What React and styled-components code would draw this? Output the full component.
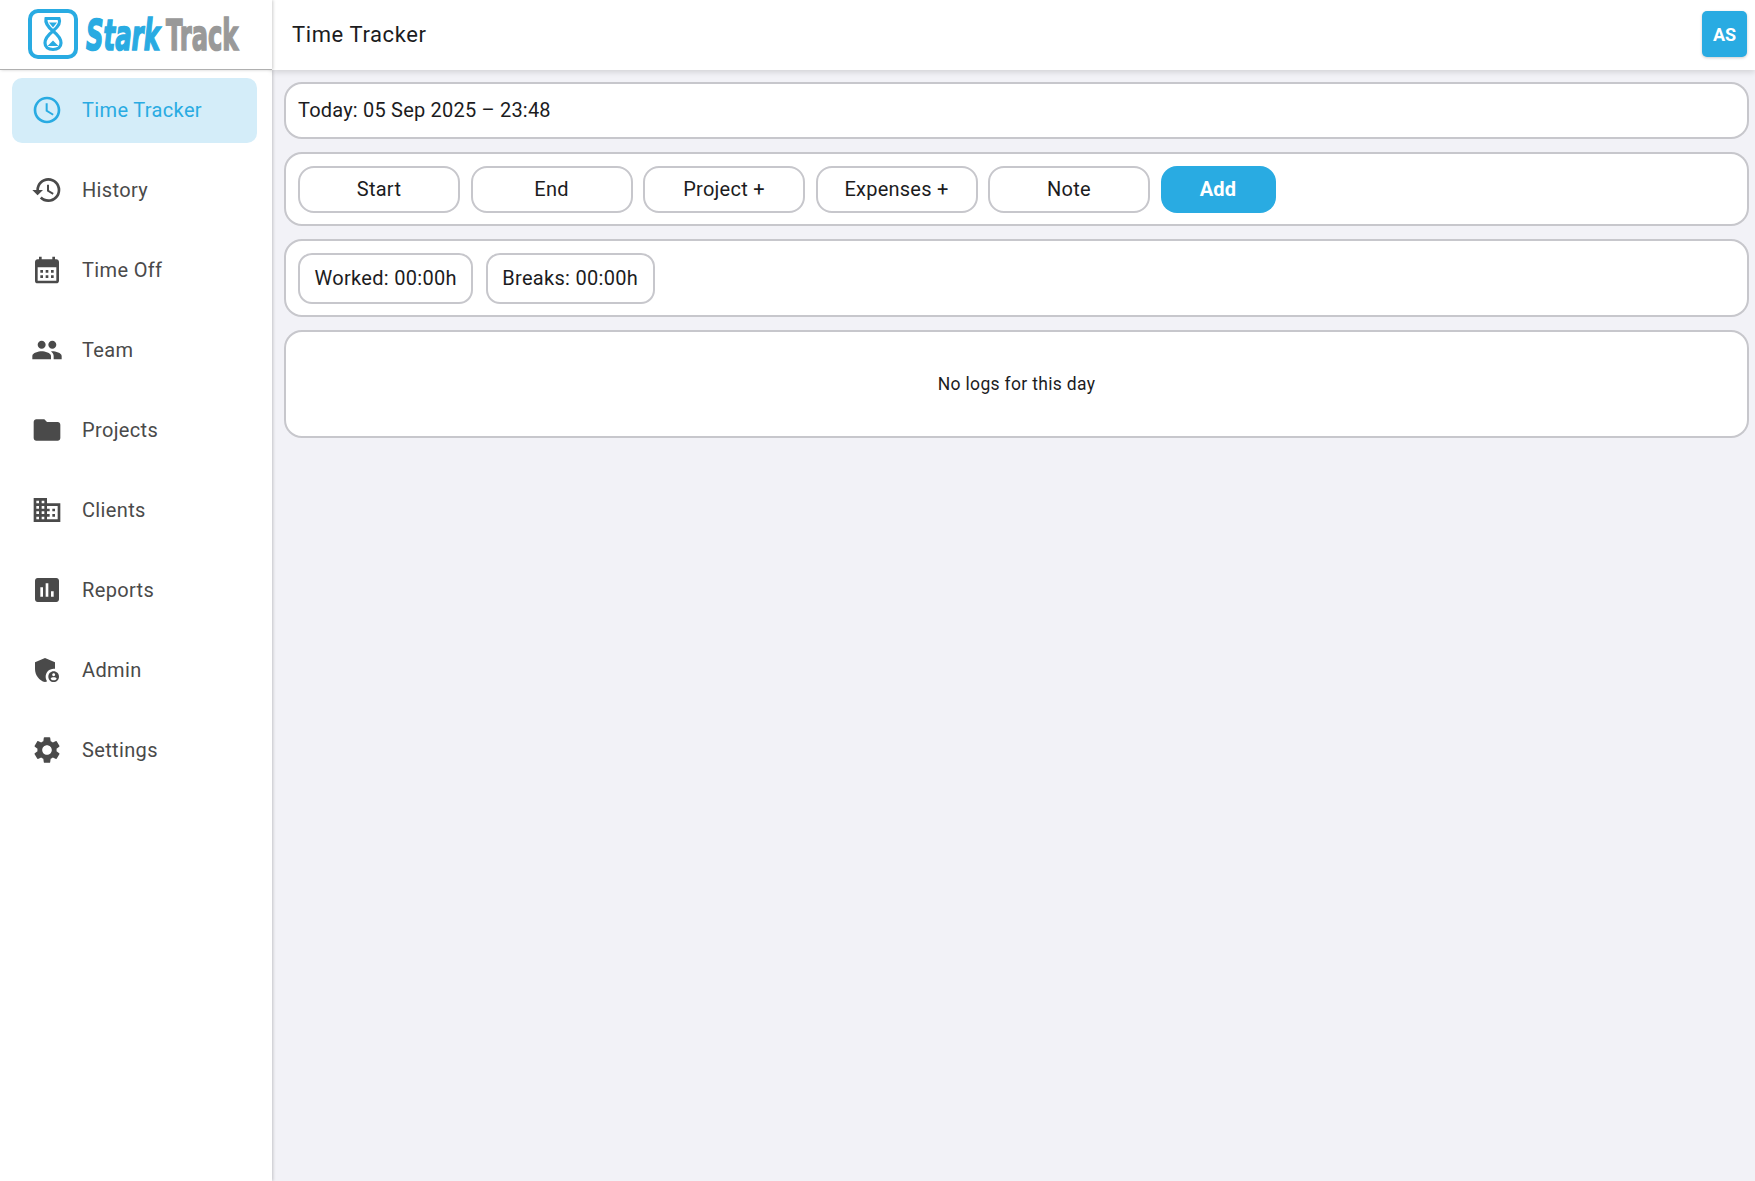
import React from 'react';
import styled, { createGlobalStyle } from 'styled-components';
import {
  MdAccessTime,
  MdHistory,
  MdCalendarMonth,
  MdPeople,
  MdFolder,
  MdDomain,
  MdAssessment,
  MdAdminPanelSettings,
  MdSettings,
} from 'react-icons/md';

const GlobalStyle = createGlobalStyle`
  html, body {
    margin: 0;
    height: 100%;
    background: #f2f2f7;
    font-family: Roboto, "Liberation Sans", sans-serif;
  }
  * {
    box-sizing: border-box;
  }
`;

const Page = styled.div`
  display: grid;
  grid-template-columns: 272px 1fr;
  grid-template-rows: 70px 1fr;
  height: 100vh;
  overflow: hidden;
`;

const LogoBar = styled.div`
  display: flex;
  align-items: center;
  padding-left: 28px;
  background: #fff;
  border-bottom: 1px solid #b0b0b0;
  box-shadow: 1px 0 3px rgba(0, 0, 0, 0.2);
  position: relative;
  z-index: 3;
`;

const TopBar = styled.header`
  display: flex;
  align-items: center;
  justify-content: space-between;
  padding: 0 8px 2px 20px;
  background: #fff;
  box-shadow: 0 2px 6px rgba(0, 0, 0, 0.14);
  position: relative;
  z-index: 2;
`;

const Title = styled.h1`
  margin: 0;
  font-size: 22px;
  font-weight: 400;
  letter-spacing: 0.6px;
  color: #1c1c1e;
`;

const Avatar = styled.div`
  width: 45px;
  height: 46px;
  display: flex;
  align-items: center;
  justify-content: center;
  border-radius: 5px;
  background: #29abe2;
  color: #fff;
  font-size: 18px;
  font-weight: 700;
  box-shadow: 0 1px 3px rgba(0, 0, 0, 0.2);
`;

const Sidebar = styled.nav`
  display: flex;
  flex-direction: column;
  gap: 15px;
  padding: 8px 15px 0 12px;
  background: #fff;
  box-shadow: 1px 0 3px rgba(0, 0, 0, 0.2);
  position: relative;
  z-index: 1;
`;

const NavItem = styled.div`
  display: flex;
  align-items: center;
  gap: 19px;
  height: 65px;
  padding: 0 0 2px 19px;
  border-radius: 10px;
  background: ${(p) => (p.$active ? '#d4edf9' : 'transparent')};
  color: ${(p) => (p.$active ? '#29abe2' : '#4a4a4a')};
  font-size: 20px;
  letter-spacing: 0.35px;

  svg {
    flex: none;
    width: 32px;
    height: 32px;
  }
`;

const Main = styled.main`
  display: flex;
  flex-direction: column;
  gap: 13px;
  padding: 12px 6px 0 12px;
`;

const Card = styled.section`
  display: flex;
  align-items: center;
  gap: ${(p) => p.$gap || '10.5px'};
  padding: 11.5px 12px;
  background: #fff;
  border: 2px solid #c7c7cc;
  border-radius: 18px;
  color: #1c1c1e;
`;

const DateText = styled.div`
  font-size: 20px;
  line-height: 28px;
  padding-bottom: 2px;
  letter-spacing: 0.2px;
`;

const ActionButton = styled.button`
  width: ${(p) => (p.$primary ? '115px' : '162px')};
  height: 47px;
  border: ${(p) => (p.$primary ? 'none' : '2px solid #c7c7cc')};
  border-radius: 16px;
  background: ${(p) => (p.$primary ? '#29abe2' : '#fff')};
  color: ${(p) => (p.$primary ? '#fff' : '#1c1c1e')};
  font-family: inherit;
  font-size: 20px;
  font-weight: ${(p) => (p.$primary ? 700 : 400)};
  letter-spacing: 0.25px;
`;

const Stat = styled.div`
  height: 51px;
  display: flex;
  align-items: center;
  padding: 0 14.5px;
  border: 2px solid #c7c7cc;
  border-radius: 14px;
  font-size: 20px;
  letter-spacing: 0.3px;
`;

const EmptyCard = styled(Card)`
  justify-content: center;
  height: 108px;
  font-size: 17.5px;
  letter-spacing: 0.32px;
`;

const BlueText = styled.text`
  fill: #29abe2;
  stroke: #29abe2;
  stroke-width: 1.6px;
  font-family: "DejaVu Sans", sans-serif;
  font-weight: 700;
  font-style: italic;
`;

const GreyText = styled.text`
  fill: #999;
  stroke: #999;
  stroke-width: 1.6px;
  font-family: "DejaVu Sans", sans-serif;
  font-weight: 700;
`;

const Logo = () => (
  <svg width="214" height="52" viewBox="0 0 214 52">
    <rect x="2" y="2" width="46" height="46" rx="8" fill="none" stroke="#29abe2" strokeWidth="4" />
    <path
      d="M18 9.5H31C33 14 30 18 25 22C20 26 17 30 17 34C17 38 20 40.5 25 40.5C30 40.5 33 38 33 34C33 30 30 26 25 22C20 18 17 14 18 9.5Z"
      fill="none"
      stroke="#29abe2"
      strokeWidth="3.2"
    />
    <path d="M21 13.5h8l-4 5zM19.5 37l5.5-5.5 5.5 5.5z" fill="#29abe2" />
    <BlueText transform="translate(58 41) scale(0.58 1)" fontSize="42">Stark</BlueText>
    <GreyText transform="translate(138 41) scale(0.575 1)" fontSize="42">Track</GreyText>
  </svg>
);

const navItems = [
  { label: 'Time Tracker', icon: MdAccessTime, active: true },
  { label: 'History', icon: MdHistory },
  { label: 'Time Off', icon: MdCalendarMonth },
  { label: 'Team', icon: MdPeople },
  { label: 'Projects', icon: MdFolder },
  { label: 'Clients', icon: MdDomain },
  { label: 'Reports', icon: MdAssessment },
  { label: 'Admin', icon: MdAdminPanelSettings },
  { label: 'Settings', icon: MdSettings },
];

const actions = ['Start', 'End', 'Project +', 'Expenses +', 'Note'];

const App = () => (
  <>
    <GlobalStyle />
    <Page>
      <LogoBar>
        <Logo />
      </LogoBar>
      <TopBar>
        <Title>Time Tracker</Title>
        <Avatar>AS</Avatar>
      </TopBar>
      <Sidebar>
        {navItems.map(({ label, icon: Icon, active }) => (
          <NavItem key={label} $active={active}>
            <Icon />
            {label}
          </NavItem>
        ))}
      </Sidebar>
      <Main>
        <Card>
          <DateText>Today: 05 Sep 2025 – 23:48</DateText>
        </Card>
        <Card>
          {actions.map((a) => (
            <ActionButton key={a}>{a}</ActionButton>
          ))}
          <ActionButton $primary>Add</ActionButton>
        </Card>
        <Card $gap="12.5px">
          <Stat>Worked: 00:00h</Stat>
          <Stat>Breaks: 00:00h</Stat>
        </Card>
        <EmptyCard>No logs for this day</EmptyCard>
      </Main>
    </Page>
  </>
);

export default App;
